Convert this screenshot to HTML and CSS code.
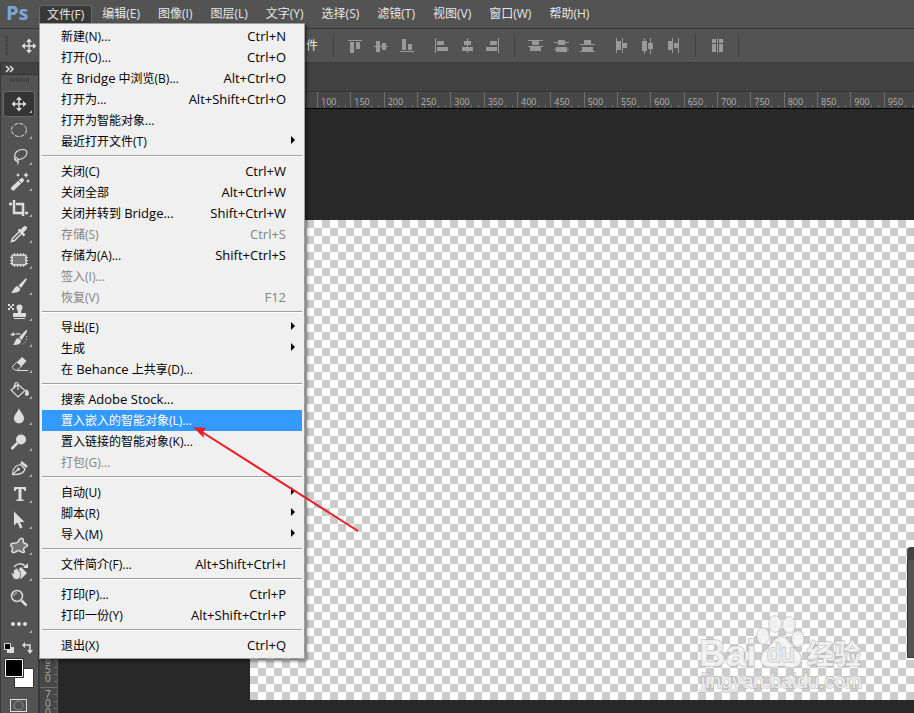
FILE: index.html
```html
<!DOCTYPE html>
<html lang="zh-CN">
<head>
<meta charset="utf-8">
<title>Ps</title>
<link rel="stylesheet" href="styles.css">
</head>
<body>
<header class="menubar">
  <span class="logo">Ps</span>
  <nav class="menus">
    <div class="menu-root">
      <button class="menu-title open">文件(F)</button>
      <div class="dropdown">
        <div class="group">
          <button class="item"><span>新建(N)...</span><kbd>Ctrl+N</kbd></button>
          <button class="item"><span>打开(O)...</span><kbd>Ctrl+O</kbd></button>
          <button class="item"><span>在 <span class="latin">Bridge</span> 中浏览(B)...</span><kbd>Alt+Ctrl+O</kbd></button>
          <button class="item"><span>打开为...</span><kbd>Alt+Shift+Ctrl+O</kbd></button>
          <button class="item"><span>打开为智能对象...</span></button>
          <button class="item sub"><span>最近打开文件(T)</span></button>
        </div>
        <div class="group">
          <button class="item"><span>关闭(C)</span><kbd>Ctrl+W</kbd></button>
          <button class="item"><span>关闭全部</span><kbd>Alt+Ctrl+W</kbd></button>
          <button class="item"><span>关闭并转到 <span class="latin">Bridge...</span></span><kbd>Shift+Ctrl+W</kbd></button>
          <button class="item" disabled><span>存储(S)</span><kbd>Ctrl+S</kbd></button>
          <button class="item"><span>存储为(A)...</span><kbd>Shift+Ctrl+S</kbd></button>
          <button class="item" disabled><span>签入(I)...</span></button>
          <button class="item" disabled><span>恢复(V)</span><kbd>F12</kbd></button>
        </div>
        <div class="group">
          <button class="item sub"><span>导出(E)</span></button>
          <button class="item sub"><span>生成</span></button>
          <button class="item"><span>在 <span class="latin">Behance</span> 上共享(D)...</span></button>
        </div>
        <div class="group">
          <button class="item"><span>搜索 <span class="latin">Adobe Stock...</span></span></button>
          <button class="item active"><span>置入嵌入的智能对象(L)...</span></button>
          <button class="item"><span>置入链接的智能对象(K)...</span></button>
          <button class="item" disabled><span>打包(G)...</span></button>
        </div>
        <div class="group">
          <button class="item sub"><span>自动(U)</span></button>
          <button class="item sub"><span>脚本(R)</span></button>
          <button class="item sub"><span>导入(M)</span></button>
        </div>
        <div class="group">
          <button class="item"><span>文件简介(F)...</span><kbd>Alt+Shift+Ctrl+I</kbd></button>
        </div>
        <div class="group">
          <button class="item"><span>打印(P)...</span><kbd>Ctrl+P</kbd></button>
          <button class="item"><span>打印一份(Y)</span><kbd>Alt+Shift+Ctrl+P</kbd></button>
        </div>
        <div class="group">
          <button class="item"><span>退出(X)</span><kbd>Ctrl+Q</kbd></button>
        </div>
      </div>
    </div>
    <button class="menu-title">编辑(E)</button>
    <button class="menu-title">图像(I)</button>
    <button class="menu-title">图层(L)</button>
    <button class="menu-title">文字(Y)</button>
    <button class="menu-title">选择(S)</button>
    <button class="menu-title">滤镜(T)</button>
    <button class="menu-title">视图(V)</button>
    <button class="menu-title">窗口(W)</button>
    <button class="menu-title">帮助(H)</button>
  </nav>
</header>

<div class="options">
  <span class="grip-v"></span>
  <svg class="current-tool" viewBox="0 0 32 26"><use href="#move"/></svg>
  <span class="option-text">件</span>
  <span class="divider"></span>
  <div class="align-set">
    <button aria-label="顶对齐"><svg viewBox="0 0 26 26"><path d="M6 7h14v1H6zM8 9h4v11H8zM14 9h4v7h-4z"/></svg></button>
    <button aria-label="垂直居中对齐"><svg viewBox="0 0 26 26"><path d="M6 13h14v1H6zM8 8h4v11H8zM14 10h4v7h-4z"/></svg></button>
    <button aria-label="底对齐"><svg viewBox="0 0 26 26"><path d="M6 18h14v1H6zM8 6h4v11H8zM14 11h4v6h-4z"/></svg></button>
  </div>
  <div class="align-set">
    <button aria-label="左对齐"><svg viewBox="0 0 26 26"><path d="M7 5h1v15H7zM9 8h7v4H9zM9 14h11v4H9z"/></svg></button>
    <button aria-label="水平居中对齐"><svg viewBox="0 0 26 26"><path d="M13 5h1v15h-1zM10 8h7v4h-7zM8 14h11v4H8z"/></svg></button>
    <button aria-label="右对齐"><svg viewBox="0 0 26 26"><path d="M18 5h1v15h-1zM10 8h7v4h-7zM6 14h11v4H6z"/></svg></button>
  </div>
  <span class="divider"></span>
  <div class="align-set">
    <button aria-label="按顶分布"><svg viewBox="0 0 26 26"><path d="M5 7h15v1H5zM9 8h7v4H9zM5 13h15v1H5zM7 14h11v4H7z"/></svg></button>
    <button aria-label="垂直居中分布"><svg viewBox="0 0 26 26"><path d="M5 9h15v1H5zM9 7h7v5H9zM5 16h15v1H5zM7 14h11v5H7z"/></svg></button>
    <button aria-label="按底分布"><svg viewBox="0 0 26 26"><path d="M5 11h15v1H5zM9 7h7v4H9zM5 18h15v1H5zM7 14h11v4H7z"/></svg></button>
  </div>
  <div class="align-set">
    <button aria-label="按左分布"><svg viewBox="0 0 26 26"><path d="M7 5h1v15H7zM8 8h4v9H8zM13 5h1v15h-1zM14 10h4v5h-4z"/></svg></button>
    <button aria-label="水平居中分布"><svg viewBox="0 0 26 26"><path d="M9 5h1v16H9zM7 8h5v10H7zM15 5h1v16h-1zM13 10h5v6h-5z"/></svg></button>
    <button aria-label="按右分布"><svg viewBox="0 0 26 26"><path d="M11 5h1v15h-1zM7 8h4v9H7zM17 5h1v15h-1zM13 10h4v5h-4z"/></svg></button>
  </div>
  <span class="divider"></span>
  <div class="align-set">
    <button aria-label="自动对齐图层"><svg viewBox="0 0 26 26"><path d="M8 6h4v4H8zM8 11h4v8H8zM13 5h1v15h-1zM15 6h4v4h-4zM15 11h4v8h-4z"/></svg></button>
  </div>
  <span class="divider"></span>
</div>

<div class="workspace">
  <aside class="toolbar">
    <button class="collapse" aria-label="展开"><svg viewBox="0 0 12 8"><path d="M1 1l3 3-3 3M5 1l3 3-3 3"/></svg></button>
    <span class="grip-h"></span>
    <div class="tools">
      <button class="tool selected" aria-label="移动"><svg viewBox="0 0 32 26"><g id="move"><path class="s" d="M16 8v10M11 13h10"/><path class="f" d="M16 5.500l3 3.500h-6zM16 20.500l3-3.500h-6zM8.500 13l3.500-3v6zM23.500 13L20 10v6z"/></g><path class="c" d="M29 19v3h-3z"/></svg></button>
      <button class="tool" aria-label="椭圆选框"><svg viewBox="0 0 32 26"><ellipse class="s thin" cx="16" cy="13" rx="7.500" ry="6.500" stroke-dasharray="4 1.500"/><path class="c" d="M29 19v3h-3z"/></svg></button>
      <button class="tool" aria-label="套索"><svg viewBox="0 0 32 26"><path class="s slim" d="M12.500 16c-1-.5-.5-2 1-1.500s2 2 .5 2.500c-2 .5-3-.5-2-1.500M13 16.500c-1 0-.5 2.500 2.500 1.500 0 1-.5 2-1 3.500M12 15.500c-1.500-6 3-9 8-9 4 0 5 3 3 6s-5 4-8.500 4"/><path class="c" d="M29 19v3h-3z"/></svg></button>
      <button class="tool" aria-label="魔棒"><svg viewBox="0 0 32 26"><path class="s thick" d="M10 19.500L19 11"/><path stroke="#535353" d="M15.500 11.500l3 3"/><path class="f" d="M15 4l.7 1.300L17 6l-1.300.7L15 8l-.7-1.300L13 6l1.300-.7zM23 3.500l1 1.500 1.500 1L24 7l-1 1.500L22 7l-1.500-1L22 5zM25 10l.7 1.300 1.300.7-1.300.7L25 14l-.7-1.300L23 12l1.300-.7z"/><path class="c" d="M29 19v3h-3z"/></svg></button>
      <button class="tool" aria-label="裁剪"><svg viewBox="0 0 32 26"><path class="s mid" d="M11 5v13h9M6 9h3M13 9h7v12M22 18h3"/><path class="c" d="M29 19v3h-3z"/></svg></button>
      <button class="tool" aria-label="吸管"><svg viewBox="0 0 32 26"><path class="s" d="M16 11l-6.500 6.500-1 3 3-1L18 13"/><path class="s thick" d="M19 10l3-3"/><path class="s mid" d="M15.500 8.500l6 6"/><path class="c" d="M29 19v3h-3z"/></svg></button>
      <button class="tool" aria-label="修补"><svg viewBox="0 0 32 26"><rect class="s shade" x="9" y="8" width="14" height="10" rx="1"/><path class="s thin" d="M11.500 6v3M14.500 6v3M17.500 6v3M20.500 6v3M11.500 17v3M14.500 17v3M17.500 17v3M20.500 17v3M7 10.500h3M7 13.500h3M7 16.500h3M22 10.500h3M22 13.500h3M22 16.500h3"/><path class="c" d="M29 19v3h-3z"/></svg></button>
      <button class="tool" aria-label="画笔"><svg viewBox="0 0 32 26"><path class="f" d="M23.500 5.500c.5.500.3 1-.3 2L18 15l-2.500-2.500L22 6c.7-.6 1.200-.8 1.500-.5zM14.500 13l2.700 2.700c0 3.300-4.200 4.300-9.200 4.300 2.500-2 2.500-6 6.500-7z"/><path class="c" d="M29 19v3h-3z"/></svg></button>
      <button class="tool" aria-label="仿制图章"><svg viewBox="0 0 32 26"><path class="f" d="M16.500 5.500a3 3 0 0 1 3 3c0 2-1.500 2.500-1.500 5.500h5v4H10v-4h5c0-3-1.500-3.500-1.500-5.500a3 3 0 0 1 3-3zM11 19h11v1H11zM5 5h2v2H5zM9 5h2v2H9zM7 7h2v2H7zM5 9h2v2H5zM9 9h2v2H9z"/><path class="c" d="M29 19v3h-3z"/></svg></button>
      <button class="tool" aria-label="历史记录画笔"><svg viewBox="0 0 32 26"><path class="f" d="M24 5c.5.500 0 1.500-.5 2.500L18.500 15 16 12.500l6-6.500c.8-.8 1.500-1.200 2-1zM15 13l3 2.500c0 4-4 4.500-8 4.500 2-2 2-6 5-7zM7 10l4-3v2c3-1 5-1 7 0l-1 1c-2-.6-3-.6-6 0v1z"/><path class="s thin" stroke-dasharray="1 2" d="M23.500 11c1 4-1 7-4 8"/><path class="c" d="M29 19v3h-3z"/></svg></button>
      <button class="tool" aria-label="橡皮擦"><svg viewBox="0 0 32 26"><path class="s thin" d="M14 11l-4 4c-1 1-.5 2 .5 3l1 1h3l4-4z"/><path class="f" d="M14 11l5-5 4.500 4-5 5.500zM14 19h11v1H14z"/><path class="c" d="M29 19v3h-3z"/></svg></button>
      <button class="tool" aria-label="油漆桶"><svg viewBox="0 0 32 26"><path class="s slim" d="M15 7.500l7 6-7 6.500-7-7zM12 10V7c0-2 3-2 3 0v6M12 7c-1 2-1.500 4-1 5"/><path class="f" d="M23 12c3 2 3.500 4 2.500 6-1 1.500-3.500 1-3.500-1z"/><path class="c" d="M29 19v3h-3z"/></svg></button>
      <button class="tool" aria-label="模糊"><svg viewBox="0 0 32 26"><path class="f" d="M16 5c1 4 5 6.500 5 10.500a5 5 0 0 1-10 0C11 11.500 15 9 16 5z"/><path class="c" d="M29 19v3h-3z"/></svg></button>
      <button class="tool" aria-label="减淡"><svg viewBox="0 0 32 26"><circle class="f" cx="18" cy="10.500" r="5"/><path class="s mid" d="M14.500 14L8.500 20"/><path class="c" d="M29 19v3h-3z"/></svg></button>
      <button class="tool" aria-label="钢笔"><svg viewBox="0 0 32 26"><path class="s slim" d="M9.500 19.500c0-6 2-9 8-10l4.500 4.500c-1 4-5 6-12.500 5.500zM10 19l5-4.500"/><circle class="f" cx="15.500" cy="14" r="1.500"/><path class="s mid" d="M18 7l6 5"/><path class="c" d="M29 19v3h-3z"/></svg></button>
      <button class="tool" aria-label="文字"><svg viewBox="0 0 32 26"><path class="f" d="M11 6h12v4h-1.500l-1-2H18.500v10.500h2V20h-7v-1.500h2V8h-2l-1 2H11z"/><path class="c" d="M29 19v3h-3z"/></svg></button>
      <button class="tool" aria-label="路径选择"><svg viewBox="0 0 32 26"><path class="f" d="M11 4.500v14l3.500-3 2.500 6 2.500-1-2.500-5.500h4.500z"/><path class="c" d="M29 19v3h-3z"/></svg></button>
      <button class="tool" aria-label="自定形状"><svg viewBox="0 0 32 26"><path class="s shade" d="M15 9c1-3 4-5 5-3s-1 3 1 4 4 1 3.500 2.500-4 2-4 3.500 2 3 0 3.500-3.500-2-5-2-3 2.500-5.500 2 0-3-.5-4.500-3-2.500-1.500-4S13 11 15 9z"/><path class="c" d="M29 19v3h-3z"/></svg></button>
      <button class="tool" aria-label="旋转视图"><svg viewBox="0 0 32 26"><path class="s" d="M11 8c3-4 8-4 11-1"/><path class="f" d="M25 4v5h-5zM18 8l6 6-6 6-2-2v-8z"/><path fill="#ddd" stroke="#535353" stroke-width=".7" d="M8 14c1-.8 2 0 2.500 1v-4c0-1 1.700-1 1.700 0v-1.500c0-1 1.800-1 1.800 0v1c0-1 1.800-1 1.800 0v2c.3-1 1.700-.7 1.700.3v4c0 4-6 5-7.500 1.700z"/><path class="c" d="M29 19v3h-3z"/></svg></button>
      <button class="tool" aria-label="缩放"><svg viewBox="0 0 32 26"><circle class="s" cx="14" cy="11" r="5.500"/><path class="s thin" d="M11 11c0-2 1-3 3-3"/><path class="s mid" d="M18.500 15.500l5 5"/></svg></button>
      <button class="tool" aria-label="更多"><svg viewBox="0 0 32 26"><circle class="f" cx="10" cy="13" r="2"/><circle class="f" cx="16" cy="13" r="2"/><circle class="f" cx="22" cy="13" r="2"/><path class="c" d="M29 19v3h-3z"/></svg></button>
    </div>
    <svg class="swatches" viewBox="0 0 38 76">
      <path fill="#ddd" d="M8 10h6v6H7v-3h1z"/><path fill="#000" stroke="#ddd" d="M4.500 6.500h6v6h-6z"/>
      <path class="s" d="M24 8h6v7"/><path class="f" d="M22 8l3-3v6zM27 13h6l-3 4z"/>
      <path fill="#fff" stroke="#333" d="M14.500 31.500h19v19h-19z"/>
      <path fill="#000" stroke="#333" d="M4.500 21.500h19v19h-19z"/><path fill="none" stroke="#fff" d="M5.500 22.500h17v17h-17z"/>
      <rect class="s thin" x="10.500" y="62.500" width="16" height="12"/><circle class="s thin" cx="18.500" cy="68.500" r="4.500" stroke-dasharray="1 1.300"/>
    </svg>
  </aside>

  <main class="document">
    <div class="tabs"></div>
    <div class="ruler-h">
      <div class="marks-h"><span>100</span><span>150</span><span>200</span><span>250</span><span>300</span><span>350</span><span>400</span><span>450</span><span>500</span><span>550</span><span>600</span><span>650</span><span>700</span><span>750</span><span>800</span><span>850</span><span>900</span><span>950</span></div>
    </div>
    <div class="stage">
      <div class="ruler-v"><div class="marks-v"><span></span><span>6<br>5<br>0</span><span>7<br>0<br>0</span></div></div>
      <div class="pasteboard"><div class="canvas"></div></div>
    </div>
    <aside class="float-panel"></aside>
    <svg class="watermark" viewBox="0 0 190 90">
      <g class="mark">
        <text x="9" y="61" class="brand">Bai</text>
        <ellipse cx="73" cy="31" rx="6" ry="8"/><ellipse cx="85" cy="19" rx="6" ry="8"/><ellipse cx="99" cy="20" rx="6" ry="8"/><ellipse cx="108" cy="34" rx="6" ry="8"/>
        <path d="M91 32c7 0 9 8 15 13 8 7 6 17-4 17-5 0-7-1-11-1s-6 1-11 1c-10 0-12-10-4-17 6-5 8-13 15-13z"/>
        <text x="77" y="57" class="du">du</text>
        <text x="117" y="59" class="cn">经验</text>
        <text x="11" y="83" class="url">jingyan.baidu.com</text>
      </g>
    </svg>
  </main>
</div>
<svg class="pointer" viewBox="0 0 170 110"><path d="M10 7l156 99" fill="none" stroke="#ed1c24" stroke-width="2"/><path d="M1 2l13 1-3 4 1 6z" fill="#ed1c24"/></svg>
</body>
</html>
```
FILE: styles.css
```css
* { box-sizing: border-box; }
html, body { height: 100%; }
body {
  margin: 0;
  display: flex;
  flex-direction: column;
  overflow: hidden;
  position: relative;
  background: #282828;
  color: #e6e6e6;
  font: 12px/21px "Open Sans", "Noto Sans CJK SC", sans-serif;
}
button { margin: 0; padding: 0; border: 0; background: none; color: inherit; font: inherit; }
svg { display: block; }

.menubar { display: flex; height: 29px; flex: none; background: #535353; border-bottom: 1px solid #383838; }
.logo { width: 39px; padding-left: 6px; font: bold 20px/26px "Open Sans", sans-serif; color: #7ba7d7; }
.menus { display: flex; align-items: flex-start; gap: 2px; padding-top: 4px; }
.menu-root { position: relative; }
.menu-title { height: 20px; padding: 0 8px; line-height: 20px; white-space: nowrap; }
.menu-title.open { height: 19px; background: #383838; border-radius: 3px 3px 0 0; box-shadow: inset 0 0 0 1px #666; }

.dropdown {
  position: absolute;
  z-index: 5;
  top: 19px;
  left: 0;
  width: 266px;
  padding: 2px;
  background: #f0f0f0;
  border: 1px solid #a0a0a0;
  box-shadow: 2px 2px 3px rgba(0, 0, 0, .5);
  color: #000;
}
.group + .group { margin-top: 3px; border-top: 1px solid #a0a0a0; padding-top: 5px; box-shadow: inset 0 1px #fff; }
.item { display: flex; justify-content: space-between; width: 100%; height: 21px; padding: 0 16px 0 19px; line-height: 21px; white-space: nowrap; }
.item kbd { font-family: inherit; font-size: 13px; }
.latin { font-size: 13px; }
.item:disabled { color: #838383; }
.item.active { background: #3399ff; color: #fff; }
.sub { align-items: center; padding-right: 7px; }
.sub::after { content: ""; margin-bottom: 4px; border: 4px solid transparent; border-left: 4px solid #000; border-right: 0; }

.options { display: flex; align-items: center; height: 34px; flex: none; background: #535353; border-bottom: 1px solid #383838; }
.grip-v { width: 3px; height: 19px; margin-left: 5px; background: repeating-linear-gradient(#3e3e3e 0 1px, transparent 1px 2px); }
.current-tool { width: 32px; height: 26px; margin-left: 5px; }
.option-text { width: 273px; text-align: right; }
.divider { width: 1px; height: 23px; margin: 0 8px; background: #404040; }
.option-text + .divider { margin-left: 15px; }
.align-set { display: flex; }
.align-set + .align-set { margin-left: 8px; }
.align-set button, .align-set svg { width: 26px; height: 26px; }
.align-set svg { fill: #999; }

.workspace { display: flex; flex: 1; min-height: 0; }
.toolbar { display: flex; flex-direction: column; width: 40px; flex: none; background: #535353; border-left: 1px solid #383838; border-right: 2px solid #383838; overflow: hidden; }
.collapse { height: 12px; flex: none; background: #424242; border-bottom: 1px solid #333; }
.collapse svg { width: 12px; height: 8px; margin-left: 4px; fill: none; stroke: #ddd; stroke-width: 1.5; }
.grip-h { width: 20px; height: 4px; flex: none; margin: 3px 0 9px 9px; background: repeating-linear-gradient(90deg, #3e3e3e 0 1px, transparent 1px 2px); }
.tools { display: flex; flex-direction: column; margin-left: 2px; }
.tool { width: 32px; height: 26px; }
.tool svg { width: 32px; height: 26px; }
.selected { background: #353535; border-radius: 3px; box-shadow: inset 0 0 0 1px #6a6a6a; }
.s { fill: none; stroke: #ddd; stroke-width: 1.5; }
.slim { stroke-width: 1.2; }
.thin { stroke-width: 1; }
.mid { stroke-width: 2.5; }
.thick { stroke-width: 4; stroke-linecap: round; }
.shade { fill: #777; }
.f { fill: #ddd; }
.c { fill: #aaa; }
.swatches { width: 38px; height: 76px; flex: none; margin-left: -1px; }

.document { position: relative; display: flex; flex-direction: column; flex: 1; min-width: 0; overflow: hidden; }
.tabs { height: 29px; flex: none; background: #424242; border-bottom: 1px solid #333; }
.ruler-h { height: 17px; flex: none; overflow: hidden; padding-left: 277px; background: #474747; border-bottom: 1px solid #000; }
.marks-h { display: grid; grid-template-columns: repeat(18, 1fr); width: 600px; }
.marks-h span {
  height: 16px;
  padding: 2px 0 0 3px;
  border-left: 1px solid #6e6e6e;
  font-size: 9px;
  line-height: 16px;
  color: #b0b0b0;
  background: repeating-linear-gradient(90deg, transparent 0 6px, #6e6e6e 6px 7px) 0 100% / 100% 3px no-repeat;
}
.stage { display: flex; flex: 1; min-height: 0; }
.ruler-v { width: 18px; flex: none; overflow: hidden; padding-top: 511px; background: #474747; border-right: 1px solid #606060; }
.marks-v { display: grid; grid-template-rows: repeat(3, 1fr); height: 100px; }
.marks-v span {
  overflow: hidden;
  padding: 2px 0 0 5px;
  border-top: 1px solid #6e6e6e;
  font-size: 10px;
  line-height: 9px;
  color: #b0b0b0;
  background: repeating-linear-gradient(transparent 0 6px, #6e6e6e 6px 7px) 100% 0 / 3px 100% no-repeat;
}
.pasteboard { flex: 1; padding: 111px 0 13px 192px; background: #282828; }
.canvas { height: 100%; background: repeating-conic-gradient(#ccc 0 25%, #fff 0 50%) 0 0 / 16px 16px; }
.float-panel { position: absolute; top: 484px; right: 0; width: 7px; height: 111px; background: #535353; border: 1px solid #333; border-top: 13px solid #424242; border-right: 0; border-radius: 4px 0 0 0; }
.watermark { position: absolute; right: 34px; bottom: 18px; width: 190px; height: 90px; }
.mark { fill: #f4f4f4; fill-opacity: .85; stroke: #b4b4b4; stroke-opacity: .6; stroke-width: 2; paint-order: stroke; }
.brand { font: bold 37px "Liberation Sans", sans-serif; }
.du { font: 25px "Liberation Sans", sans-serif; }
.cn { font: bold 27px "Noto Sans CJK SC", sans-serif; }
.url { font: 20px "Liberation Sans", sans-serif; }
.pointer { position: absolute; z-index: 6; left: 192px; top: 425px; width: 170px; height: 110px; pointer-events: none; }
```
